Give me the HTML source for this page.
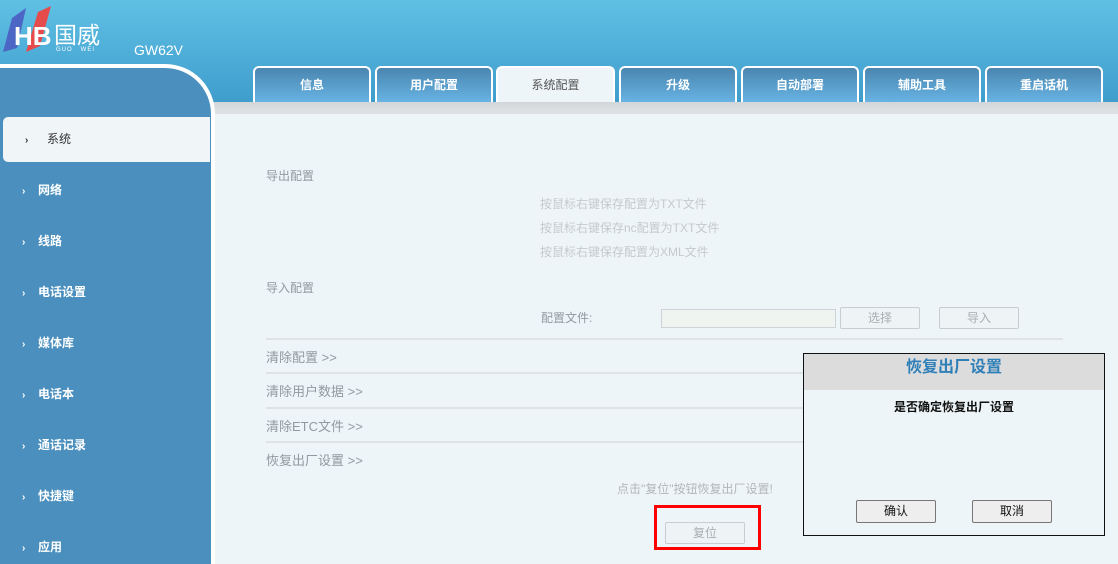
<!DOCTYPE html><html><head><meta charset="utf-8"><style>
*{margin:0;padding:0;box-sizing:border-box}
body{width:1118px;height:553px;overflow:hidden;position:relative;font-family:"Liberation Sans","Noto Sans CJK SC",sans-serif;font-size:12px;background:#eef5f8}
.hdr{position:absolute;left:0;top:0;width:1118px;height:114px;background:linear-gradient(#60c0e4,#3f9dcc 90%)}
.band{position:absolute;left:210px;top:102px;width:908px;height:12px;background:linear-gradient(#d3d6d9,#dfe2e4)}
.side{position:absolute;left:-10px;top:64px;width:225px;height:500px;background:#4a8fbd;border:4px solid #fff;border-left:none;border-bottom:none;border-top-right-radius:50px}
.tab{position:absolute;top:66px;height:36px;border:2px solid #fff;border-bottom:none;border-radius:6px 6px 0 0;background:linear-gradient(#4a86b0,#67b3e3);color:#fff;font-weight:bold;font-size:12px;text-align:center;line-height:34px}
.tab.on{background:#eef5f8;color:#555;font-weight:normal}
.nav{position:absolute;left:22px;color:#fff;font-weight:bold;font-size:12px}
.nav b{display:inline-block;width:16px;font-size:10px}
.sel{position:absolute;left:3px;top:117px;width:207px;height:45px;background:#f0f5f8;border-radius:5px 0 0 5px}
.g{position:absolute;color:#909aa0;font-size:12px}
.l{position:absolute;color:#c5c9cc}
.line{position:absolute;left:266px;width:797px;height:2px;background:#dde3e6}
.btn{position:absolute;height:22px;border:1px solid #c7cdd0;background:#eef3f5;color:#a8aeb2;text-align:center;line-height:20px;border-radius:2px}
</style></head><body>
<div class="hdr"></div>
<svg style="position:absolute;left:0;top:0" width="56" height="56"><path d="M3 52 L12 18 L26 8 L17 48 Z" fill="#4b66c4"/><path d="M26 52 L38 12 L51 6 L40 46 Z" fill="#e54b4b"/><text x="14" y="45" font-family="Liberation Sans" font-weight="bold" font-size="26" fill="#fff">HB</text></svg>
<div style="position:absolute;left:54px;top:16px;color:#fff;font-size:23px">国威</div>
<div style="position:absolute;left:56px;top:47px;color:#fff;font-size:6px;letter-spacing:1px;line-height:7px">GUO&nbsp;&nbsp;&nbsp;WEI</div>
<div style="position:absolute;left:134px;top:42px;color:#fff;font-size:14px">GW62V</div>
<div class="band"></div>
<div class="side"></div>
<div class="sel"></div>
<div class="nav" style="left:25px;top:130px;color:#333;font-weight:normal"><b style="width:22px">›</b>系统</div>
<div class="nav" style="top:181px"><b>›</b>网络</div>
<div class="nav" style="top:232px"><b>›</b>线路</div>
<div class="nav" style="top:283px"><b>›</b>电话设置</div>
<div class="nav" style="top:334px"><b>›</b>媒体库</div>
<div class="nav" style="top:385px"><b>›</b>电话本</div>
<div class="nav" style="top:436px"><b>›</b>通话记录</div>
<div class="nav" style="top:487px"><b>›</b>快捷键</div>
<div class="nav" style="top:538px"><b>›</b>应用</div>
<div class="tab" style="left:253px;width:118px">信息</div>
<div class="tab" style="left:375px;width:118px">用户配置</div>
<div class="tab on" style="left:496px;width:119px">系统配置</div>
<div class="tab" style="left:619px;width:118px">升级</div>
<div class="tab" style="left:741px;width:118px">自动部署</div>
<div class="tab" style="left:863px;width:118px">辅助工具</div>
<div class="tab" style="left:985px;width:118px">重启话机</div>
<div class="g" style="left:266px;top:167px">导出配置</div>
<div class="l" style="left:540px;top:195px">按鼠标右键保存配置为TXT文件</div>
<div class="l" style="left:540px;top:219px">按鼠标右键保存nc配置为TXT文件</div>
<div class="l" style="left:540px;top:243px">按鼠标右键保存配置为XML文件</div>
<div class="g" style="left:266px;top:279px">导入配置</div>
<div class="g" style="left:541px;top:309px">配置文件:</div>
<div style="position:absolute;left:661px;top:309px;width:175px;height:19px;border:1px solid #cdd3d6;background:#f0f4f1"></div>
<div class="btn" style="left:840px;top:307px;width:80px">选择</div>
<div class="btn" style="left:939px;top:307px;width:80px">导入</div>
<div class="line" style="top:338px"></div>
<div class="g" style="left:266px;top:347px;font-size:13px">清除配置 &gt;&gt;</div>
<div class="line" style="top:372px"></div>
<div class="g" style="left:266px;top:381px;font-size:13px">清除用户数据 &gt;&gt;</div>
<div class="line" style="top:407px"></div>
<div class="g" style="left:266px;top:416px;font-size:13px">清除ETC文件 &gt;&gt;</div>
<div class="line" style="top:441px"></div>
<div class="g" style="left:266px;top:450px;font-size:13px">恢复出厂设置 &gt;&gt;</div>
<div class="l" style="left:617px;top:480px;color:#b0b6ba">点击"复位"按钮恢复出厂设置!</div>
<div style="position:absolute;left:654px;top:505px;width:107px;height:45px;border:3px solid #f00"></div>
<div class="btn" style="left:665px;top:522px;width:80px">复位</div>
<div style="position:absolute;left:803px;top:353px;width:302px;height:183px;border:1px solid #111;background:#eef5f8">
<div style="height:36px;background:#dcdcdc;color:#2f7fb8;font-weight:bold;font-size:16px;text-align:center;line-height:28px">恢复出厂设置</div>
<div style="text-align:center;color:#111;font-weight:bold;margin-top:8px">是否确定恢复出厂设置</div>
<div style="position:absolute;left:52px;top:146px;width:80px;height:23px;border:1px solid #777;background:#eee;border-radius:2px;text-align:center;line-height:21px;color:#111">确认</div>
<div style="position:absolute;left:168px;top:146px;width:80px;height:23px;border:1px solid #777;background:#eee;border-radius:2px;text-align:center;line-height:21px;color:#111">取消</div>
</div>
</body></html>
